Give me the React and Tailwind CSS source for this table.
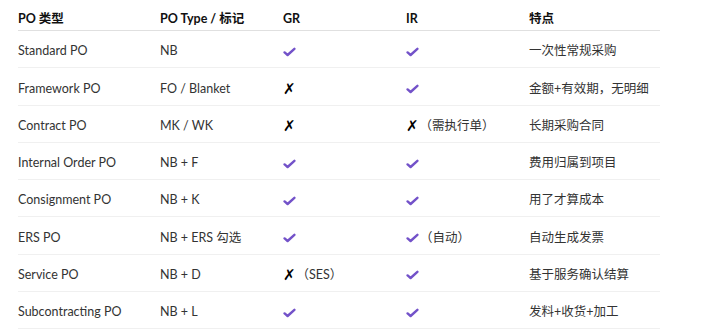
const rows = [
  ['Standard PO', 'NB', ['y'], ['y'], '一次性常规采购'],
  ['Framework PO', 'FO / Blanket', ['n'], ['y'], '金额+有效期，无明细'],
  ['Contract PO', 'MK / WK', ['n'], ['n', '（需执行单）'], '长期采购合同'],
  ['Internal Order PO', 'NB + F', ['y'], ['y'], '费用归属到项目'],
  ['Consignment PO', 'NB + K', ['y'], ['y'], '用了才算成本'],
  ['ERS PO', 'NB + ERS 勾选', ['y'], ['y', '（自动）'], '自动生成发票'],
  ['Service PO', 'NB + D', ['n', '（SES）'], ['y'], '基于服务确认结算'],
  ['Subcontracting PO', 'NB + L', ['y'], ['y'], '发料+收货+加工'],
];

function Check() {
  return (
    <svg width="13" height="10" viewBox="0 0 13 10" className="inline-block shrink-0">
      <path d="M1.6 5.4 L4.6 8 L11.4 1.8" fill="none" stroke="#7352c9" strokeWidth="2.4" strokeLinecap="round" strokeLinejoin="round" />
    </svg>
  );
}

function Mark({ value }) {
  const [kind, note] = value;
  return (
    <div className="flex items-center">
      {kind === 'y' ? <Check /> : <span className="text-[15px] leading-4 text-black font-['DejaVu_Sans',sans-serif]">✗</span>}
      {note && <span className="ml-[1px]">{note}</span>}
    </div>
  );
}

export default function App() {
  const cols = 'grid grid-cols-[142px_123px_123px_123px_131px]';
  return (
    <div className="w-[720px] h-[334px] bg-white overflow-hidden pl-[18px] font-['Lato','Noto_Sans_CJK_SC',sans-serif] text-[12.5px] text-[#333]">
      <div className="w-[642px]">
        <div className={`${cols} h-[31px] pt-[11px] leading-4 font-bold text-[#111] border-b border-[#e0e0e0]`}>
          <div>PO 类型</div>
          <div>PO Type / 标记</div>
          <div>GR</div>
          <div>IR</div>
          <div>特点</div>
        </div>
        {rows.map((r) => (
          <div key={r[0]} className={`${cols} h-[37.3px] pt-[5px] items-center border-b border-[#f0f0f0]`}>
            <div>{r[0]}</div>
            <div>{r[1]}</div>
            <Mark value={r[2]} />
            <Mark value={r[3]} />
            <div>{r[4]}</div>
          </div>
        ))}
      </div>
    </div>
  );
}
